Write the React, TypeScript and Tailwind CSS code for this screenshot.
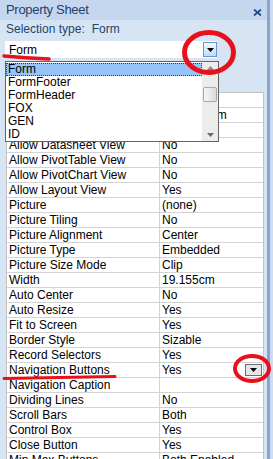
import React from 'react';

const rows: [string, string][] = [
  ['Caption', ''],
  ['Default View', 'Single Form'],
  ['Allow Form View', 'Yes'],
  ['Allow Datasheet View', 'No'],
  ['Allow PivotTable View', 'No'],
  ['Allow PivotChart View', 'No'],
  ['Allow Layout View', 'Yes'],
  ['Picture', '(none)'],
  ['Picture Tiling', 'No'],
  ['Picture Alignment', 'Center'],
  ['Picture Type', 'Embedded'],
  ['Picture Size Mode', 'Clip'],
  ['Width', '19.155cm'],
  ['Auto Center', 'No'],
  ['Auto Resize', 'Yes'],
  ['Fit to Screen', 'Yes'],
  ['Border Style', 'Sizable'],
  ['Record Selectors', 'Yes'],
  ['Navigation Buttons', 'Yes'],
  ['Navigation Caption', ''],
  ['Dividing Lines', 'No'],
  ['Scroll Bars', 'Both'],
  ['Control Box', 'Yes'],
  ['Close Button', 'Yes'],
  ['Min Max Buttons', 'Both Enabled'],
];

const items = ['Form', 'FormFooter', 'FormHeader', 'FOX', 'GEN', 'ID'];

const Arrow = ({ color = '#000' }: { color?: string }) => (
  <svg width="7" height="4" viewBox="0 0 7 4">
    <path d="M0 0H7L3.5 4Z" fill={color} />
  </svg>
);

const App = () => {
  return (
    <div className="relative w-[273px] h-[459px] overflow-hidden flex bg-[#d6e4f4] font-['Liberation_Sans',Arial,sans-serif] text-[12px] text-black">
      <div className="w-[267px] flex flex-col">
        {/* Title bar */}
        <div className="h-[20px] shrink-0 bg-[#c4d7ee] flex items-center justify-between pl-[6px] pr-[5px] text-[13px] text-[#1e3f6f]">
          <span className="tracking-[-0.3px]">Property Sheet</span>
          <svg width="9" height="7" viewBox="0 0 9 7" className="mt-[4px]">
            <path d="M1 0.5L8 6.5M8 0.5L1 6.5" stroke="#1d4c8c" strokeWidth="1.8" />
          </svg>
        </div>

        {/* Selection type */}
        <div className="h-[15px] shrink-0 mt-[1px] flex items-center pl-[6px] text-[#24446e]">
          <span>Selection type:</span>
          <span className="ml-[7px]">Form</span>
        </div>

        {/* Combo */}
        <div className="shrink-0 mt-[5px] ml-[5px] w-[212px] h-[17px] bg-white flex items-center">
          <span className="flex-1 pl-[4px]">Form</span>
          <div className="w-[14px] h-[15px] border border-[#6c94c5] bg-gradient-to-b from-[#f4faff] to-[#bcdcf8] flex items-center justify-center">
            <Arrow />
          </div>
        </div>

        {/* Tab strip (hidden behind list) */}
        <div className="h-[34px] shrink-0" />

        {/* Property grid */}
        <div className="ml-[6px] w-[258px] border-l border-r border-t border-[#c3c3c3] bg-white">
          {rows.map(([name, value]) => (
            <div key={name} className="flex h-[15px] border-b border-[#d3d3d3] leading-[14px]">
              <div className="w-[153px] shrink-0 border-r border-[#d3d3d3] pl-[2px] whitespace-nowrap overflow-hidden">
                {name}
              </div>
              <div className="flex-1 pl-[2px] flex items-start justify-between whitespace-nowrap">
                <span>{value}</span>
                {name === 'Navigation Buttons' && (
                  <div className="mt-[1px] mr-[1px] w-[17px] h-[12px] border border-[#6f6f6f] bg-[#e6e6e6] flex items-center justify-center">
                    <Arrow />
                  </div>
                )}
              </div>
            </div>
          ))}
        </div>
      </div>
      <div className="w-[3px] bg-[#87a6cf]" />
      <div className="w-[3px] bg-[#cddcef]" />

      {/* Dropdown list */}
      <div className="absolute left-[5px] top-[61px] w-[214px] h-[81px] border border-[#646464] bg-white flex">
        <div className="flex-1 pt-[1px]">
          {items.map((it, i) => (
            <div
              key={it}
              className={
                i === 0
                  ? 'h-[13px] leading-[11px] pl-[1px] bg-[#94c4f8] border border-dotted border-[#3a3a3a]'
                  : 'h-[13px] leading-[13px] pl-[2px]'
              }
            >
              {it}
            </div>
          ))}
        </div>
        <div className="w-[16px] bg-[#ececec] flex flex-col items-center">
          <div className="h-[13px] flex items-center justify-center rotate-180">
            <Arrow color="#8a8a8a" />
          </div>
          <div className="mt-[12px] w-[14px] h-[15px] border border-[#a9a9a9] rounded-[2px] bg-gradient-to-r from-[#f6f6f6] to-[#dcdcdc]" />
          <div className="flex-1" />
          <div className="h-[13px] flex items-center justify-center">
            <Arrow color="#6a6a6a" />
          </div>
        </div>
      </div>

      {/* Red annotations */}
      <svg className="absolute inset-0 pointer-events-none" width="273" height="459" viewBox="0 0 273 459">
        <ellipse cx="209" cy="52.5" rx="24.5" ry="20" fill="none" stroke="#e8101a" strokeWidth="5" />
        <path d="M4 56Q26 58 49 59" fill="none" stroke="#e8101a" strokeWidth="3.5" strokeLinecap="round" />
        <ellipse cx="252" cy="368.5" rx="17" ry="12.5" fill="none" stroke="#e8101a" strokeWidth="4" />
        <path d="M4 378.5L115 376.5" fill="none" stroke="#e8101a" strokeWidth="3" strokeLinecap="round" />
      </svg>
    </div>
  );
};

export default App;
